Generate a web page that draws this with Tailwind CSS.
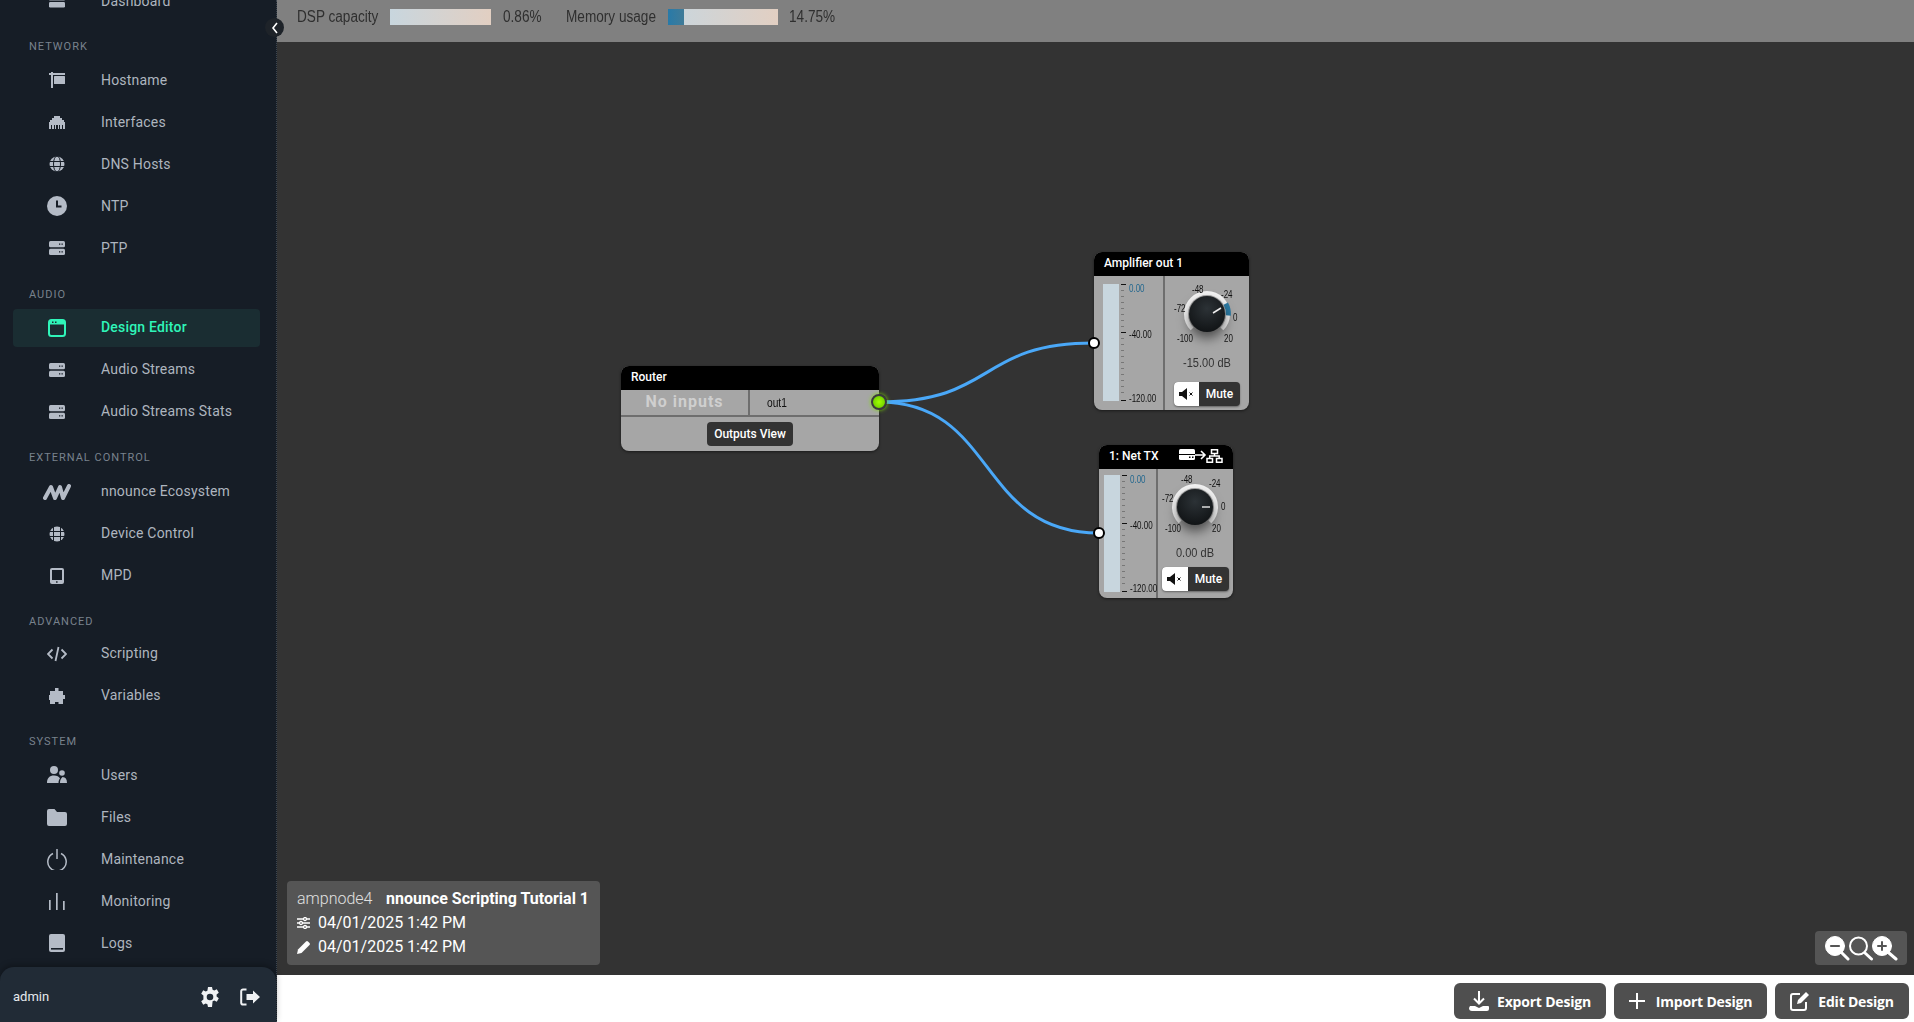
<!DOCTYPE html>
<html lang="en">
<head>
<meta charset="utf-8">
<title>Design Editor</title>
<script src="https://cdn.jsdelivr.net/npm/@tailwindcss/browser@4"></script>
</head>
<body class="h-screen overflow-hidden bg-white font-['Roboto',sans-serif]">
<div class="flex h-[1022px] w-[1914px]">
  <!-- Sidebar -->
  <aside class="relative z-10 flex h-full w-[277px] shrink-0 flex-col border-r border-dotted border-[#3d4650] bg-[#161d26]">
    <nav class="mt-[-18px] min-h-0 flex-1 overflow-hidden text-[14px] tracking-[0.2px] text-[#aeb5bf]">
      <a class="ml-[13px] mb-1 flex h-[38px] w-[247px] items-center pl-[34px]"><span class="flex w-5 justify-center"><svg width="16" height="16" viewBox="0 0 16 16" fill="#b4bbc6"><rect y="2" width="16" height="5.5" rx="1.2"/><rect y="9" width="16" height="5.5" rx="1.2"/></svg></span><span class="ml-[34px]">Dashboard</span></a>
      <div class="mt-[19.25px] mb-[6px] h-4 pl-[29px] text-[11px] leading-4 tracking-[1px] text-[#79828d]">NETWORK</div>
      <a class="ml-[13px] mb-1 flex h-[38px] w-[247px] items-center pl-[34px]"><span class="flex w-5 justify-center"><svg width="16" height="16" viewBox="0 0 16 16" fill="#b4bbc6"><rect x="2" y="0" width="2" height="16"/><rect x="0" y="1" width="16" height="2"/><rect x="5" y="4" width="11" height="8" rx="0.5"/></svg></span><span class="ml-[34px]">Hostname</span></a>
      <a class="ml-[13px] mb-1 flex h-[38px] w-[247px] items-center pl-[34px]"><span class="flex w-5 justify-center"><svg width="16" height="13" viewBox="0 0 16 13" fill="#b4bbc6"><path d="M5 0h6v2h2v2h2v2h1v7h-2V9h-1v4h-2V9h-1v4H9V9H7v4H6V9H5v4H3V9H2v4H0V6h1V4h2V2h2z"/></svg></span><span class="ml-[34px]">Interfaces</span></a>
      <a class="ml-[13px] mb-1 flex h-[38px] w-[247px] items-center pl-[34px]"><span class="flex w-5 justify-center"><svg width="16" height="16" viewBox="0 0 16 16" fill="none" stroke="#b4bbc6"><circle cx="8" cy="8" r="7.5" fill="#b4bbc6" stroke="none"/><path d="M0 5.5h16M0 10.5h16" stroke="#161d26"/><ellipse cx="8" cy="8" rx="3.5" ry="8" stroke="#161d26"/></svg></span><span class="ml-[34px]">DNS Hosts</span></a>
      <a class="ml-[13px] mb-1 flex h-[38px] w-[247px] items-center pl-[34px]"><span class="flex w-5 justify-center"><svg width="20" height="20" viewBox="0 0 20 20"><circle cx="10" cy="10" r="10" fill="#b4bbc6"/><path d="M10 4.5V10.500h4.500" fill="none" stroke="#161d26" stroke-width="2"/></svg></span><span class="ml-[34px]">NTP</span></a>
      <a class="ml-[13px] mb-1 flex h-[38px] w-[247px] items-center pl-[34px]"><span class="flex w-5 justify-center"><svg width="16" height="14" viewBox="0 0 16 14" fill="#b4bbc6"><rect width="16" height="6.300" rx="1.500"/><rect y="7.700" width="16" height="6.300" rx="1.500"/><g fill="#161d26"><rect x="10" y="2.500" width="1.300" height="1.300"/><rect x="12.500" y="2.500" width="1.300" height="1.300"/><rect x="10" y="10.200" width="1.300" height="1.300"/><rect x="12.500" y="10.200" width="1.300" height="1.300"/></g></svg></span><span class="ml-[34px]">PTP</span></a>

      <div class="mt-[19.25px] mb-[6px] h-4 pl-[29px] text-[11px] leading-4 tracking-[1px] text-[#79828d]">AUDIO</div>
      <a class="ml-[13px] mb-1 flex h-[38px] w-[247px] items-center rounded-[4px] bg-[#1a2d32] pl-[34px] font-medium text-[#2ff5b9]"><span class="flex w-5 justify-center"><svg width="18" height="18" viewBox="0 0 18 18"><rect x="1" y="1" width="16" height="16" rx="2.500" fill="none" stroke="#2ff5b9" stroke-width="2"/><path d="M1 1h16v4.500H1z" fill="#2ff5b9"/><rect x="4" y="2.500" width="1.500" height="1.500" fill="#1a2d32"/><rect x="7" y="2.500" width="1.500" height="1.500" fill="#1a2d32"/></svg></span><span class="ml-[34px]">Design Editor</span></a>
      <a class="ml-[13px] mb-1 flex h-[38px] w-[247px] items-center pl-[34px]"><span class="flex w-5 justify-center"><svg width="16" height="14" viewBox="0 0 16 14" fill="#b4bbc6"><rect width="16" height="6.300" rx="1.500"/><rect y="7.700" width="16" height="6.300" rx="1.500"/><g fill="#161d26"><rect x="10" y="2.500" width="1.300" height="1.300"/><rect x="12.500" y="2.500" width="1.300" height="1.300"/><rect x="10" y="10.200" width="1.300" height="1.300"/><rect x="12.500" y="10.200" width="1.300" height="1.300"/></g></svg></span><span class="ml-[34px]">Audio Streams</span></a>
      <a class="ml-[13px] mb-1 flex h-[38px] w-[247px] items-center pl-[34px]"><span class="flex w-5 justify-center"><svg width="16" height="14" viewBox="0 0 16 14" fill="#b4bbc6"><rect width="16" height="6.300" rx="1.500"/><rect y="7.700" width="16" height="6.300" rx="1.500"/><g fill="#161d26"><rect x="10" y="2.500" width="1.300" height="1.300"/><rect x="12.500" y="2.500" width="1.300" height="1.300"/><rect x="10" y="10.200" width="1.300" height="1.300"/><rect x="12.500" y="10.200" width="1.300" height="1.300"/></g></svg></span><span class="ml-[34px]">Audio Streams Stats</span></a>

      <div class="mt-[19.25px] mb-[7px] h-4 pl-[29px] text-[11px] leading-4 tracking-[1px] text-[#79828d]">EXTERNAL CONTROL</div>
      <a class="ml-[13px] mb-1 flex h-[38px] w-[247px] items-center pl-[34px]"><span class="flex w-5 justify-center"><svg width="28" height="16" viewBox="0 0 28 16" class="shrink-0" fill="none" stroke="#b4bbc6" stroke-width="4" stroke-linejoin="round" stroke-linecap="round"><path d="M2 14 8 3l4 11 5-11 3 11 6-12"/></svg></span><span class="ml-[34px]">nnounce Ecosystem</span></a>
      <a class="ml-[13px] mb-1 flex h-[38px] w-[247px] items-center pl-[34px]"><span class="flex w-5 justify-center"><svg width="16" height="16" viewBox="0 0 16 16" fill="none"><circle cx="8" cy="8" r="7.500" fill="#b4bbc6"/><path d="M0 5.500h16M0 10.500h16" stroke="#161d26"/><path d="M4.500 0v16M11.500 0v16" stroke="#161d26"/></svg></span><span class="ml-[34px]">Device Control</span></a>
      <a class="ml-[13px] mb-1 flex h-[38px] w-[247px] items-center pl-[34px]"><span class="flex w-5 justify-center"><svg width="14" height="16" viewBox="0 0 14 16"><rect width="14" height="16" rx="2" fill="#b4bbc6"/><rect x="2" y="2" width="10" height="10" fill="#161d26"/><rect x="6" y="13.300" width="1.600" height="1.400" fill="#161d26"/></svg></span><span class="ml-[34px]">MPD</span></a>

      <div class="mt-[19px] mb-[5px] h-4 pl-[29px] text-[11px] leading-4 tracking-[1px] text-[#79828d]">ADVANCED</div>
      <a class="ml-[13px] mb-1 flex h-[38px] w-[247px] items-center pl-[34px]"><span class="flex w-5 justify-center"><svg width="20" height="16" viewBox="0 0 20 16" fill="none" stroke="#b4bbc6" stroke-width="1.800"><path d="M5.500 3.500 1 8l4.500 4.500M14.500 3.500 19 8l-4.500 4.500M11.500 1 8.500 15"/></svg></span><span class="ml-[34px]">Scripting</span></a>
      <a class="ml-[13px] mb-1 flex h-[38px] w-[247px] items-center pl-[34px]"><span class="flex w-5 justify-center"><svg width="16" height="16" viewBox="0 0 16 16" fill="#b4bbc6"><path d="M6 0h3.500v3H14v4h2v4h-2v5H9.500v-2H6v2H1v-4H0V7h1V3h5z"/></svg></span><span class="ml-[34px]">Variables</span></a>

      <div class="mt-[19.25px] mb-[6px] h-4 pl-[29px] text-[11px] leading-4 tracking-[1px] text-[#79828d]">SYSTEM</div>
      <a class="ml-[13px] mb-1 flex h-[38px] w-[247px] items-center pl-[34px]"><span class="flex w-5 justify-center"><svg width="20" height="18" viewBox="0 0 20 18" fill="#b4bbc6"><circle cx="7" cy="4" r="4"/><path d="M0 17c0-5 2.500-7.500 7-7.500 3 0 5 1 6 3-1 1-1.500 2.500-1.500 4.500z"/><circle cx="15" cy="7" r="2.800"/><path d="M13 17c0-3 .8-4.500 2.500-6 3 0 4.500 2 4.500 6z"/></svg></span><span class="ml-[34px]">Users</span></a>
      <a class="ml-[13px] mb-1 flex h-[38px] w-[247px] items-center pl-[34px]"><span class="flex w-5 justify-center"><svg width="20" height="17" viewBox="0 0 20 17" fill="#b4bbc6"><path d="M2 0h5.500l2.500 3h8a2 2 0 0 1 2 2v10a2 2 0 0 1-2 2H2a2 2 0 0 1-2-2V2a2 2 0 0 1 2-2z"/></svg></span><span class="ml-[34px]">Files</span></a>
      <a class="ml-[13px] mb-1 flex h-[38px] w-[247px] items-center pl-[34px]"><span class="flex w-5 justify-center"><svg width="20" height="21" viewBox="0 0 20 21" fill="none" stroke="#b4bbc6" stroke-width="1.500"><path d="M6 4.500a9.200 9.200 0 1 0 8 0M10 0v10"/></svg></span><span class="ml-[34px]">Maintenance</span></a>
      <a class="ml-[13px] mb-1 flex h-[38px] w-[247px] items-center pl-[34px]"><span class="flex w-5 justify-center"><svg width="16" height="17" viewBox="0 0 16 17" fill="#b4bbc6"><rect x="0" y="7" width="1.700" height="10"/><rect x="7" y="0" width="1.700" height="17"/><rect x="14" y="8" width="1.700" height="9"/></svg></span><span class="ml-[34px]">Monitoring</span></a>
      <a class="ml-[13px] mb-1 flex h-[38px] w-[247px] items-center pl-[34px]"><span class="flex w-5 justify-center"><svg width="16" height="18" viewBox="0 0 16 18"><rect width="16" height="18" rx="2" fill="#b4bbc6"/><rect x="2" y="14" width="12" height="1.600" fill="#161d26"/></svg></span><span class="ml-[34px]">Logs</span></a>
    </nav>
    <div class="flex h-[55px] shrink-0 items-center justify-between rounded-t-[14px] bg-[#212b36] pt-1 pr-4 pl-[13px] shadow-[0_-2px_6px_rgba(0,0,0,0.3)]">
      <span class="text-[13px] text-[#e6e9ed]">admin</span>
      <div class="flex items-center gap-5">
        <svg width="20" height="20" viewBox="0 0 20 20" fill="#f0f2f4"><path fill-rule="evenodd" d="M8 0h4l.6 2.800 1.700.8 2.500-1.300 2 3.400-2.200 1.900v1.800l2.200 1.900-2 3.400-2.500-1.300-1.700.8L12 20H8l-.6-2.800-1.700-.8-2.500 1.300-2-3.400 2.200-1.900V10.600 8.600L1.200 6.700l2-3.400 2.500 1.300 1.700-.8zM10 6.700a3.300 3.300 0 1 0 0 6.600 3.300 3.300 0 0 0 0-6.600z"/></svg>
        <svg width="20" height="18" viewBox="0 0 20 18"><path d="M6.500 1.500H3A1.800 1.800 0 0 0 1.200 3.300v11.400A1.800 1.800 0 0 0 3 16.500h3.500" fill="none" stroke="#f0f2f4" stroke-width="2"/><path d="M13 2.500 20 9l-7 6.500V12H6.500V6H13z" fill="#f0f2f4"/></svg>
      </div>
    </div>
    <button class="absolute top-[18px] right-[-8px] flex h-[19px] w-[19px] items-center justify-center rounded-full bg-[#1e2329]"><svg width="8" height="12" viewBox="0 0 8 12" fill="none" stroke="#ffffff" stroke-width="1.600"><path d="M6 1 2 6l4 5"/></svg></button>
  </aside>

  <!-- Main -->
  <main class="flex min-w-0 flex-1 flex-col">
    <div class="flex h-[42px] shrink-0 items-center bg-[#808080] pb-2 pl-5 font-['Liberation_Sans',sans-serif] text-[16px] whitespace-nowrap text-[#2f2f2f]">
      <span class="block w-[93px] origin-left scale-x-[0.85]">DSP capacity</span>
      <div class="h-4 w-[101px] bg-gradient-to-r from-[#c8d6de] to-[#e2cfc2]"></div>
      <span class="ml-3 block w-[63px] origin-left scale-x-[0.85]">0.86%</span>
      <span class="block w-[102px] origin-left scale-x-[0.85]">Memory usage</span>
      <div class="h-4 w-[110px] bg-gradient-to-r from-[#c8d6de] to-[#e2cfc2]"><div class="h-full w-4 bg-gradient-to-r from-[#287aa8] to-[#3f7b98]"></div></div>
      <span class="ml-[11px] block origin-left scale-x-[0.85]">14.75%</span>
    </div>

    <div class="relative min-h-0 flex-1 bg-[#333333]">
      <svg class="absolute top-0 left-0" width="1637" height="933" fill="none" stroke="#4aa8f8" stroke-width="3">
        <path d="M602 360C720 360 700 301 817 301"/>
        <path d="M602 360C720 360 700 491 822 491"/>
      </svg>

      <!-- Router -->
      <div class="absolute top-[324px] left-[344px] w-[258px] rounded-[8px] bg-[#a6a6a6] shadow-[0_1px_3px_rgba(0,0,0,0.5)]">
        <div class="flex h-6 items-center rounded-t-[8px] bg-black pb-[2px] pl-[10px] text-[12px] font-medium text-white">Router</div>
        <div class="flex h-[27px] border-b-2 border-[#6e6e6e]">
          <div class="flex w-[129px] items-center justify-center border-r-2 border-[#6e6e6e] pb-[2px] text-[16px] font-bold tracking-[1px] text-[#cfcfcf]">No inputs</div>
          <div class="flex flex-1 items-center pl-[17px]"><span class="block origin-left scale-x-[0.85] font-['Liberation_Sans',sans-serif] text-[12px] text-[#111]">out1</span></div>
        </div>
        <div class="flex h-[34px] items-center justify-center"><button class="flex h-6 w-[86px] items-center justify-center rounded-[4px] bg-[#333333] text-[12px] font-medium text-white">Outputs View</button></div>
        <span class="absolute top-[28px] right-[-8px] h-4 w-4 rounded-full border-[2.5px] border-[#3a3a3a] bg-[radial-gradient(circle,#a0ff00,#62c000)] shadow-[0_0_4px_#7fe000]"></span>
      </div>

      <!-- Amplifier -->
      <div class="absolute top-[210px] left-[817px] flex h-[158px] w-[155px] flex-col rounded-[8px] bg-[#a6a6a6] shadow-[0_1px_3px_rgba(0,0,0,0.5)]">
        <div class="flex h-6 shrink-0 items-center rounded-t-[8px] bg-black pb-[2px] pl-[10px] text-[12px] font-medium text-white">Amplifier out 1</div>
        <div class="flex min-h-0 flex-1 font-['Liberation_Sans',sans-serif] whitespace-nowrap">
          <div class="relative w-[71px] border-r-2 border-[#6e6e6e]">
            <div class="absolute top-2 left-[9px] h-[117px] w-4 bg-[#c8d6de]"></div>
            <svg class="absolute top-2 left-[27px]" width="7" height="118" stroke="#777"><path d="M0 .500h5M0 48.500h5M0 116.500h5" stroke="#111"/><path d="M0 6.500h3M0 12.500h3M0 18.500h3M0 24.500h3M0 30.500h3M0 36.500h3M0 42.500h3M0 54.500h3M0 60.500h3M0 66.500h3M0 72.500h3M0 78.500h3M0 84.500h3M0 90.500h3M0 96.500h3M0 102.500h3M0 108.500h3"/></svg>
            <span class="absolute top-[7px] left-[35px] origin-left scale-x-[0.8] text-[10px] leading-3 text-[#24688f]">0.00</span>
            <span class="absolute top-[53px] left-[35px] origin-left scale-x-[0.8] text-[10px] leading-3 text-[#111]">-40.00</span>
            <span class="absolute top-[117px] left-[35px] origin-left scale-x-[0.8] text-[10px] leading-3 text-[#111]">-120.00</span>
          </div>
          <div class="relative flex-1">
            <svg class="absolute top-[2px] left-[5px] overflow-visible" width="74" height="72" viewBox="0 0 74 72" fill="none">
              <defs><radialGradient id="ka" cx="50%" cy="35%" r="65%"><stop offset="0" stop-color="#2c3236"/><stop offset="1" stop-color="#111416"/></radialGradient></defs>
              <path d="M22.150 50.850A21 21 0 1 1 51.850 50.850" stroke="#f4f4f4" stroke-width="4"/>
              <path d="M55.800 25.600A21.500 21.500 0 0 1 58.400 37.500" stroke="#2c7ba4" stroke-width="5"/>
              <circle class="drop-shadow-[0_6px_6px_rgba(0,0,0,0.55)]" cx="37" cy="36" r="18" fill="url(#ka)"/>
              <path d="M43 35 51 30" stroke="#eee" stroke-width="1.500"/>
            </svg>
            <span class="absolute top-[8px] left-[27px] origin-left scale-x-[0.8] text-[10px] leading-3 text-[#111]">-48</span>
            <span class="absolute top-[13px] left-[56px] origin-left scale-x-[0.8] text-[10px] leading-3 text-[#111]">-24</span>
            <span class="absolute top-[27px] left-[9px] origin-left scale-x-[0.8] text-[10px] leading-3 text-[#111]">-72</span>
            <span class="absolute top-[36px] left-[68px] origin-left scale-x-[0.8] text-[10px] leading-3 text-[#111]">0</span>
            <span class="absolute top-[57px] left-[12px] origin-left scale-x-[0.8] text-[10px] leading-3 text-[#111]">-100</span>
            <span class="absolute top-[57px] left-[59px] origin-left scale-x-[0.8] text-[10px] leading-3 text-[#111]">20</span>
            <span class="absolute top-[79px] left-0 w-[84px] scale-x-[0.85] text-center text-[13px] leading-4 text-[#333]">-15.00 dB</span>
            <div class="absolute top-[106px] left-[9px] flex h-6 w-[66px] overflow-hidden rounded-[4px] bg-[#333333] font-['Roboto',sans-serif] text-[12px] font-medium text-white shadow-[0_1px_2px_rgba(0,0,0,0.4)]">
              <span class="flex w-[25px] items-center justify-center bg-white"><svg width="16" height="12" viewBox="0 0 16 12" fill="#111"><path d="M0 4h3l5-4v12L3 8H0z"/><path d="m10.500 4.500 3 3m0-3-3 3" stroke="#111" fill="none"/></svg></span>
              <span class="flex flex-1 items-center justify-center">Mute</span>
            </div>
          </div>
        </div>
        <span class="absolute top-[85px] left-[-6px] h-3 w-3 rounded-full border-2 border-black bg-white"></span>
      </div>

      <!-- Net TX -->
      <div class="absolute top-[403px] left-[822px] flex h-[153px] w-[134px] flex-col rounded-[8px] bg-[#a6a6a6] shadow-[0_1px_3px_rgba(0,0,0,0.5)]">
        <div class="flex h-6 shrink-0 items-center justify-between rounded-t-[8px] bg-black pr-[10px] pb-[2px] pl-[10px] text-[12px] font-medium text-white">
          <span>1: Net TX</span>
          <svg width="44" height="14" viewBox="0 0 44 14" fill="none"><rect y="0" width="16" height="11" rx="1.500" fill="#fff"/><path d="M0 5.500h16" stroke="#000"/><rect x="10" y="7.500" width="1.500" height="1.500" fill="#000"/><rect x="13" y="7.500" width="1.500" height="1.500" fill="#000"/><path d="M16 6h10M22 2l4 4-4 4" stroke="#fff" stroke-width="1.600"/><path d="M32.500 .800h6v3.800h-6zM28 9.500h5.500v3.700H28zM37.500 9.500H43v3.700h-5.500zM35.500 4.600v2.400M30.700 9.500V7h9.500v2.500" stroke="#fff" stroke-width="1.500"/></svg>
        </div>
        <div class="flex min-h-0 flex-1 font-['Liberation_Sans',sans-serif] whitespace-nowrap">
          <div class="relative w-[59px] border-r-2 border-[#6e6e6e]">
            <div class="absolute top-[6px] left-[5px] h-[117px] w-4 bg-[#c8d6de]"></div>
            <svg class="absolute top-[6px] left-[23px]" width="7" height="118" stroke="#777"><path d="M0 .500h5M0 48.500h5M0 116.500h5" stroke="#111"/><path d="M0 6.500h3M0 12.500h3M0 18.500h3M0 24.500h3M0 30.500h3M0 36.500h3M0 42.500h3M0 54.500h3M0 60.500h3M0 66.500h3M0 72.500h3M0 78.500h3M0 84.500h3M0 90.500h3M0 96.500h3M0 102.500h3M0 108.500h3"/></svg>
            <span class="absolute top-[5px] left-[31px] origin-left scale-x-[0.8] text-[10px] leading-3 text-[#24688f]">0.00</span>
            <span class="absolute top-[51px] left-[31px] origin-left scale-x-[0.8] text-[10px] leading-3 text-[#111]">-40.00</span>
            <span class="absolute top-[114px] left-[31px] origin-left scale-x-[0.8] text-[10px] leading-3 text-[#111]">-120.00</span>
          </div>
          <div class="relative flex-1">
            <svg class="absolute top-[2px] left-0 overflow-visible" width="74" height="72" viewBox="0 0 74 72" fill="none">
              <defs><radialGradient id="kb" cx="50%" cy="35%" r="65%"><stop offset="0" stop-color="#2c3236"/><stop offset="1" stop-color="#111416"/></radialGradient></defs>
              <path d="M22.150 50.850A21 21 0 1 1 51.850 50.850" stroke="#f4f4f4" stroke-width="4"/>
              <circle class="drop-shadow-[0_6px_6px_rgba(0,0,0,0.55)]" cx="37" cy="36" r="18" fill="url(#kb)"/>
              <path d="M44 36h8" stroke="#ddd" stroke-width="1.500"/>
            </svg>
            <span class="absolute top-[5px] left-[23px] origin-left scale-x-[0.8] text-[10px] leading-3 text-[#111]">-48</span>
            <span class="absolute top-[9px] left-[51px] origin-left scale-x-[0.8] text-[10px] leading-3 text-[#111]">-24</span>
            <span class="absolute top-[24px] left-[4px] origin-left scale-x-[0.8] text-[10px] leading-3 text-[#111]">-72</span>
            <span class="absolute top-[32px] left-[63px] origin-left scale-x-[0.8] text-[10px] leading-3 text-[#111]">0</span>
            <span class="absolute top-[54px] left-[7px] origin-left scale-x-[0.8] text-[10px] leading-3 text-[#111]">-100</span>
            <span class="absolute top-[54px] left-[54px] origin-left scale-x-[0.8] text-[10px] leading-3 text-[#111]">20</span>
            <span class="absolute top-[76px] left-0 w-[74px] scale-x-[0.85] text-center text-[13px] leading-4 text-[#333]">0.00 dB</span>
            <div class="absolute top-[98px] left-1 flex h-6 w-[67px] overflow-hidden rounded-[4px] bg-[#333333] font-['Roboto',sans-serif] text-[12px] font-medium text-white shadow-[0_1px_2px_rgba(0,0,0,0.4)]">
              <span class="flex w-[26px] items-center justify-center bg-white"><svg width="16" height="12" viewBox="0 0 16 12" fill="#111"><path d="M0 4h3l5-4v12L3 8H0z"/><path d="m10.500 4.500 3 3m0-3-3 3" stroke="#111" fill="none"/></svg></span>
              <span class="flex flex-1 items-center justify-center">Mute</span>
            </div>
          </div>
        </div>
        <span class="absolute top-[82px] left-[-6px] h-3 w-3 rounded-full border-2 border-black bg-white"></span>
      </div>

      <!-- Info -->
      <div class="absolute bottom-[10px] left-[10px] h-[84px] w-[313px] rounded-[4px] bg-[#555555] px-[10px] pt-[6px] text-[16px] leading-6 text-white">
        <div class="flex h-6 items-center"><span class="w-[89px] font-light text-[#e0e0e0]">ampnode4</span><span class="font-bold">nnounce Scripting Tutorial 1</span></div>
        <div class="flex h-6 items-center gap-2"><svg width="13" height="12" viewBox="0 0 13 12" fill="none" stroke="#fff" stroke-width="1.300"><path d="M0 2h13M0 6h13M0 10h13"/><circle cx="8" cy="2" r="1.500" fill="#555"/><circle cx="4" cy="6" r="1.500" fill="#555"/><circle cx="8" cy="10" r="1.500" fill="#555"/></svg>04/01/2025 1:42 PM</div>
        <div class="flex h-6 items-center gap-2"><svg width="13" height="13" viewBox="0 0 13 13" fill="#fff"><path d="M0 13l1-4.500L9 .5a1.500 1.500 0 0 1 2 0l1.500 1.500a1.500 1.500 0 0 1 0 2l-8 8z"/></svg>04/01/2025 1:42 PM</div>
      </div>

      <!-- Zoom -->
      <div class="absolute right-[7px] bottom-[10px] flex h-[34px] w-[92px] items-center justify-center rounded-[4px] bg-[#555555]">
        <svg width="73" height="25" viewBox="0 0 73 25" fill="none" stroke="#fff" stroke-linecap="round">
          <circle cx="10" cy="10" r="9.500" fill="#fff"/><path d="M17 17l6 6" stroke-width="3"/><path d="M6 10h8" stroke="#555" stroke-width="2.200"/>
          <circle cx="33.500" cy="10" r="8.500" stroke-width="2"/><path d="M40 17l6.500 6" stroke-width="3"/>
          <circle cx="57" cy="10" r="9.500" fill="#fff"/><path d="M64 17l7 6" stroke-width="3"/><path d="M53 10h8M57 6v8" stroke="#555" stroke-width="2"/>
        </svg>
      </div>
    </div>

    <div class="flex h-[47px] shrink-0 items-start justify-end gap-2 pt-2 pr-[5px] font-['Open_Sans',sans-serif] text-[14px] font-bold tracking-[-0.2px] text-white">
      <button class="flex h-9 w-[152px] items-center justify-center gap-2 rounded-[6px] bg-[#4f4f4f]"><svg width="20" height="20" viewBox="0 0 20 20" fill="#fff"><path d="M10 0v12M5 7.500l5 5 5-5" stroke="#fff" stroke-width="2" fill="none"/><path d="M1 15h5l4 2 4-2h5a1 1 0 0 1 1 1v2a2 2 0 0 1-2 2H3a3 3 0 0 1-3-3z"/></svg>Export Design</button>
      <button class="flex h-9 w-[153px] items-center justify-center gap-[11px] rounded-[6px] bg-[#4f4f4f]"><svg width="16" height="16" viewBox="0 0 16 16" stroke="#fff" stroke-width="2"><path d="M8 0v16M0 8h16"/></svg>Import Design</button>
      <button class="flex h-9 w-[134px] items-center justify-center gap-2 rounded-[6px] bg-[#4f4f4f]"><svg width="20" height="20" viewBox="0 0 20 20" fill="none" stroke="#fff" stroke-width="2"><path d="M10 3H3a2 2 0 0 0-2 2v12a2 2 0 0 0 2 2h11a2 2 0 0 0 2-2v-6"/><path d="M7 13l1-4 8-8 3 3-8 8z" fill="#fff" stroke="none"/></svg>Edit Design</button>
    </div>
  </main>
</div>
</body>
</html>
